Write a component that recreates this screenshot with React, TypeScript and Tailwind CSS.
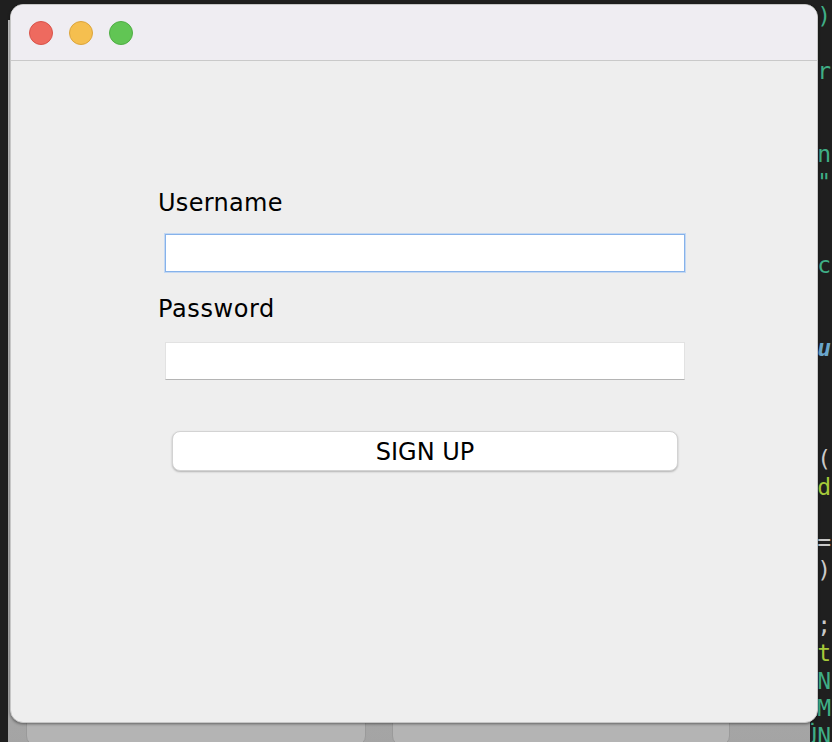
const codeLines: { text: string; color: string; extra?: string }[] = [
  { text: '")', color: 'text-[#3fae86]' },
  { text: '', color: '' },
  { text: 'or', color: 'text-[#3fae86]' },
  { text: '', color: '' },
  { text: '', color: '' },
  { text: 'on', color: 'text-[#3fae86]' },
  { text: '""', color: 'text-[#3fae86]' },
  { text: '', color: '' },
  { text: '', color: '' },
  { text: 'ac', color: 'text-[#3fae86]' },
  { text: '', color: '' },
  { text: '', color: '' },
  { text: 'u', color: 'text-[#6aa6cc]', extra: 'italic font-bold' },
  { text: '', color: '' },
  { text: '', color: '' },
  { text: '', color: '' },
  { text: 'n(', color: 'text-[#c9c9c9]' },
  { text: 'ld', color: 'text-[#a5c93a]' },
  { text: '', color: '' },
  { text: '=', color: 'text-[#c9c9c9]' },
  { text: ')', color: 'text-[#c9c9c9]' },
  { text: '', color: '' },
  { text: ';', color: 'text-[#c9c9c9]' },
  { text: 't', color: 'text-[#a5c93a]' },
  { text: 'AN', color: 'text-[#3fae86]' },
  { text: 'AM', color: 'text-[#3fae86]' },
  { text: 'ÜN', color: 'text-[#3fae86]' },
]

function TrafficLights() {
  return (
    <div className="flex gap-[16px] pl-[18px] pt-[16px]">
      <div className="h-[24px] w-[24px] rounded-full border border-[#d9534a] bg-[#ee6a5f]" />
      <div className="h-[24px] w-[24px] rounded-full border border-[#dca53c] bg-[#f5bf4f]" />
      <div className="h-[24px] w-[24px] rounded-full border border-[#4fae44] bg-[#61c554]" />
    </div>
  )
}

export default function App() {
  return (
    <div className="relative h-[742px] w-[832px] overflow-hidden bg-[#1f1f1f] font-['DejaVu_Sans',sans-serif]">
      {/* editor text peeking out on the right */}
      <div className="absolute right-[1px] top-[3px] flex flex-col items-end font-['DejaVu_Sans_Mono',monospace] text-[23px] leading-[27.7px]">
        {codeLines.map((l, i) => (
          <div key={i} className={`h-[27.7px] ${l.color} ${l.extra ?? ''}`}>
            {l.text}
          </div>
        ))}
      </div>

      {/* window behind */}
      <div className="absolute bottom-[-4px] left-[8px] top-[20px] flex w-[802px] items-end gap-[26px] bg-gradient-to-b from-[#c4c4c4] to-[#a4a4a4] pl-[18px]">
        <div className="h-[80px] w-[340px] rounded-b-[10px] border border-[#9a9a9a] bg-[#b4b4b4]" />
        <div className="h-[80px] w-[338px] rounded-b-[10px] border border-[#9a9a9a] bg-[#b4b4b4]" />
      </div>

      {/* login window */}
      <div className="absolute left-[10px] top-[4px] flex h-[719px] w-[808px] flex-col overflow-hidden rounded-[13px] border border-[#c6c6c6] bg-[#eeeeee] shadow-[0_1px_3px_rgba(0,0,0,0.45)]">
        <div className="h-[56px] shrink-0 border-b border-[#c9c9c9] bg-[#efedf2]">
          <TrafficLights />
        </div>

        <div className="flex flex-col pt-[128px] text-[24px] leading-[28px] text-black">
          <label className="ml-[147px] tracking-[0.3px]">Username</label>
          <input
            type="text"
            className="ml-[154px] mt-[17px] h-[38px] w-[520px] border border-[#86b2ea] bg-white shadow-[0_0_0_1px_#c3d8f3] outline-none"
          />
          <label className="ml-[147px] mt-[23px] tracking-[0.6px]">Password</label>
          <input
            type="password"
            className="ml-[154px] mt-[19px] h-[38px] w-[520px] border border-b-[#b4b4b4] border-l-[#e2e2e2] border-r-[#e2e2e2] border-t-[#e2e2e2] bg-white outline-none"
          />
          <button className="ml-[161px] mt-[51px] h-[40px] w-[506px] rounded-[8px] border border-[#d3d3d3] bg-white pt-[1px] text-[24px] leading-[28px] text-black shadow-[0_1px_2px_rgba(0,0,0,0.25)]">
            SIGN UP
          </button>
        </div>
      </div>
    </div>
  )
}
